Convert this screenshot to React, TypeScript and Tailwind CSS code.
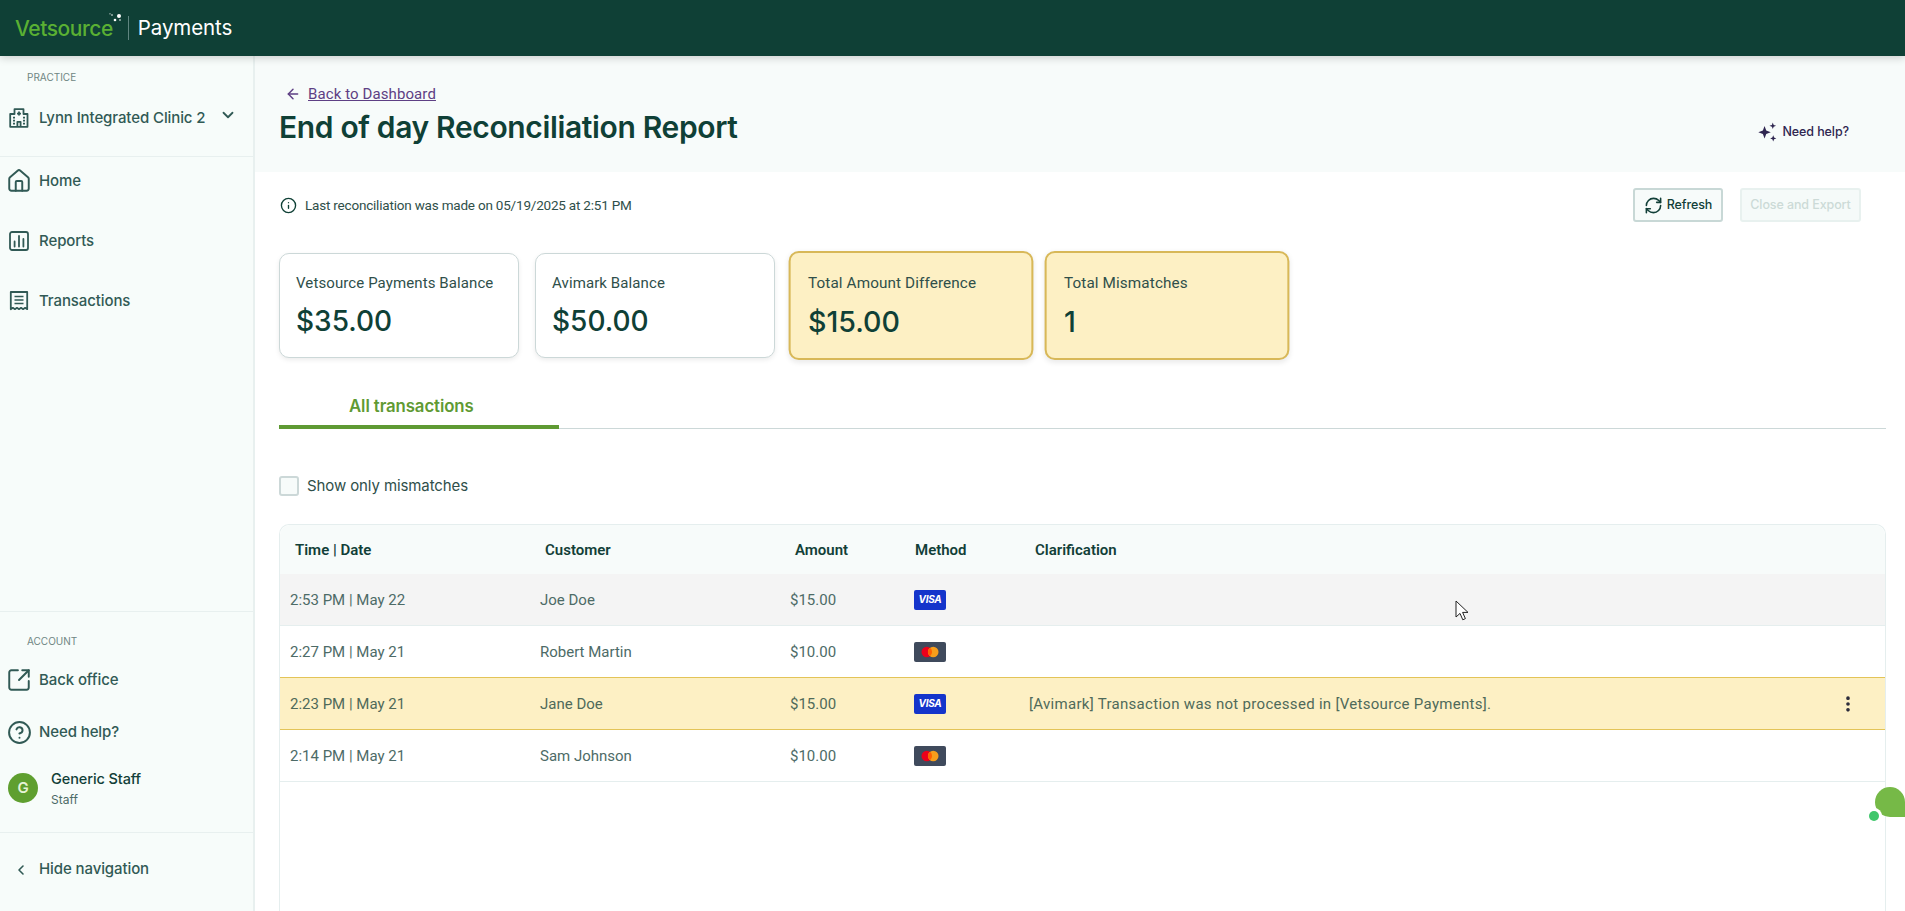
import * as React from "react";
import {
  ArrowLeft,
  ChevronDown,
  ChevronLeft,
  CircleHelp,
  EllipsisVertical,
  House,
  Info,
  RefreshCw,
  SquareArrowOutUpRight,
} from "lucide-react";

type Row = {
  when: string;
  customer: string;
  amount: string;
  method: "visa" | "mc";
  note?: string;
  tone?: "hover" | "warn";
};

const rows: Row[] = [
  { when: "2:53 PM | May 22", customer: "Joe Doe", amount: "$15.00", method: "visa", tone: "hover" },
  { when: "2:27 PM | May 21", customer: "Robert Martin", amount: "$10.00", method: "mc" },
  {
    when: "2:23 PM | May 21",
    customer: "Jane Doe",
    amount: "$15.00",
    method: "visa",
    note: "[Avimark] Transaction was not processed in [Vetsource Payments].",
    tone: "warn",
  },
  { when: "2:14 PM | May 21", customer: "Sam Johnson", amount: "$10.00", method: "mc" },
];

const cols = "grid grid-cols-[250px_250px_120px_120px_1fr]";

function CardIcon({ method }: { method: Row["method"] }) {
  if (method === "visa") {
    return (
      <span className="flex h-5 w-8 items-center justify-center rounded-[2px] bg-[#1434cb] font-['Inter',sans-serif] text-[10px] font-bold italic tracking-[-0.3px] text-white">
        VISA
      </span>
    );
  }
  return (
    <span className="flex h-5 w-8 items-center justify-center rounded-[2px] bg-[#3f4a5c]">
      <svg width="18" height="12" viewBox="0 0 18 12">
        <circle cx="5.8" cy="6" r="5.3" fill="#eb001b" />
        <circle cx="12.2" cy="6" r="5.3" fill="#f79e1b" />
        <path d="M9 1.8a5.3 5.3 0 0 1 0 8.4 5.3 5.3 0 0 1 0-8.4z" fill="#ff5f00" />
      </svg>
    </span>
  );
}

function ClinicIcon() {
  return (
    <svg width="20" height="20" viewBox="0 0 20 20" fill="none" stroke="#315a55" strokeWidth="1.8" strokeLinejoin="round">
      <path d="M5.5 6V1.2h9V6h4v12.8H1.2V6z" />
      <path d="M10 3.6v4M8 5.6h4" strokeWidth="1.8" />
      <path d="M8.4 18.8v-5h3.2v5" />
      <path d="M4 9.6h2M4 12.6h2M4 15.6h2M14 9.6h2M14 12.6h2M14 15.6h2" strokeWidth="1.6" />
    </svg>
  );
}

function ReportsIcon() {
  return (
    <svg width="20" height="20" viewBox="0 0 20 20" fill="none" stroke="#315a55" strokeWidth="1.8" strokeLinecap="round">
      <rect x="1" y="1" width="18" height="18" rx="2" />
      <path d="M5.6 10.5v5M10 5v10.5M14.4 8v7.5" />
    </svg>
  );
}

function ReceiptIcon() {
  return (
    <svg width="20" height="20" viewBox="0 0 20 20" fill="none" stroke="#315a55" strokeWidth="1.8" strokeLinejoin="round">
      <path d="M1.8 1h16.4v17.2l-2.05-1.4-2.05 1.4-2.05-1.4L10 18.2l-2.05-1.4-2.05 1.4-2.05-1.4-2.05 1.4z" />
      <path d="M5.5 5.5h9M5.5 9h9M5.5 12.5h9" strokeWidth="1.6" />
    </svg>
  );
}

function Sparkles() {
  return (
    <svg width="20" height="20" viewBox="0 0 18 18" fill="#2f2650">
      <path d="M6.8 3.6 8.3 7.7l4.1 1.5-4.1 1.5-1.5 4.1-1.5-4.1L1.2 9.2l4.1-1.5z" />
      <path d="M14.2 0.4 15 2.6l2.2.8-2.2.8-.8 2.2-.8-2.2-2.2-.8 2.2-.8z" />
      <path d="M14.6 12l.8 2 2 .8-2 .8-.8 2-.8-2-2-.8 2-.8z" />
    </svg>
  );
}

function NavItem({ icon, label, className }: { icon: React.ReactNode; label: string; className: string }) {
  return (
    <div className={`flex items-center gap-[10px] pl-[9px] font-['Inter',sans-serif] text-[15px] font-medium tracking-[-0.1px] text-[#315a55] ${className}`}>
      <span className="flex w-5 justify-center">{icon}</span>
      {label}
    </div>
  );
}

function StatCard({ label, value, warn }: { label: string; value: string; warn?: boolean }) {
  return (
    <div
      className={
        warn
          ? "h-[107px] w-[240px] scale-[1.02] rounded-[10px] border-2 border-[#d8b858] bg-[#fdf0c4] px-[17px] pt-[19px] shadow-[0_2px_5px_rgba(0,0,0,0.08)]"
          : "h-[105px] w-[240px] rounded-[10px] border border-[#ccd8d8] bg-white px-4 pt-[19px] shadow-[0_2px_5px_rgba(0,0,0,0.08)]"
      }
    >
      <div className="font-['Roboto',sans-serif] text-[15px] leading-5 tracking-[0.1px] text-[#2f4f4a]">{label}</div>
      <div className="mt-[8px] font-['Inter',sans-serif] text-[28px] font-medium leading-[40px] text-[#0f4036]">{value}</div>
    </div>
  );
}

export default function App() {
  return (
    <div className="relative h-screen overflow-hidden bg-white">
      <header className="relative z-10 flex h-14 items-center bg-[#0f4036] pl-[15px] shadow-[0_2px_8px_rgba(0,0,0,0.18)]">
        <div className="relative font-['Inter',sans-serif] text-[21px] font-medium leading-none tracking-[-0.45px] text-[#5ab033]">
          Vetsource
          <svg className="absolute -right-[9px] -top-[5px]" width="13" height="11" viewBox="0 0 13 11" fill="#fff">
            <circle cx="10" cy="3" r="2" />
            <circle cx="6" cy="7" r="1.3" />
            <circle cx="3" cy="2" r="0.8" />
            <circle cx="1" cy="0.8" r="0.6" />
            <circle cx="11" cy="7" r="0.8" />
          </svg>
        </div>
        <div className="ml-[15px] h-6 w-px bg-[#5f8580]" />
        <div className="ml-[9px] font-['Inter',sans-serif] text-[20.5px] leading-none tracking-[-0.1px] text-white">Payments</div>
      </header>

      <div className="flex h-[855px]">
        <aside className="flex w-[255px] shrink-0 flex-col justify-between border-r-2 border-[#e8f0ef] bg-[#f7fcfa]">
          <div>
            <div className="border-b border-[#e8f0ef] pb-0">
              <div className="pl-[27px] pt-[15px] font-['Inter',sans-serif] text-[10px] leading-3 text-[#6f8683]">PRACTICE</div>
              <div className="mb-[23px] mt-[20px] flex h-[30px] items-center pl-[9px]">
                <ClinicIcon />
                <span className="ml-[10px] font-['Inter',sans-serif] text-[15px] font-medium tracking-[-0.1px] text-[#315a55]">
                  Lynn Integrated Clinic 2
                </span>
                <ChevronDown className="ml-auto mb-[6px] mr-[16px]" size={18} strokeWidth={2.4} color="#315a55" />
              </div>
            </div>
            <div className="flex flex-col gap-[12px]">
              <NavItem className="h-[48px]" icon={<House className="shrink-0" size={26} strokeWidth={1.8} />} label="Home" />
              <NavItem className="h-[48px]" icon={<ReportsIcon />} label="Reports" />
              <NavItem className="h-[48px]" icon={<ReceiptIcon />} label="Transactions" />
            </div>
          </div>
          <div>
            <div className="border-t border-[#e8f0ef] pl-[27px] pt-[23px] font-['Inter',sans-serif] text-[10px] leading-3 text-[#6f8683]">ACCOUNT</div>
            <NavItem className="mt-[11px] h-[44px]" icon={<SquareArrowOutUpRight className="shrink-0" size={26} strokeWidth={1.8} />} label="Back office" />
            <NavItem className="mt-[8px] h-[44px]" icon={<CircleHelp className="shrink-0" size={25} strokeWidth={1.9} />} label="Need help?" />
            <div className="mt-[6px] flex h-[56px] items-center pl-2">
              <div className="flex h-[30px] w-[30px] items-center justify-center rounded-full bg-[#5f9f2f] font-['Inter',sans-serif] text-[15px] font-semibold text-[#e6f3d6]">
                G
              </div>
              <div className="ml-[13px] font-['Inter',sans-serif]">
                <div className="text-[14.5px] font-medium leading-5 tracking-[-0.1px] text-[#123f38]">Generic Staff</div>
                <div className="mt-[3px] text-[12px] leading-4 text-[#4d6b67]">Staff</div>
              </div>
            </div>
            <div className="mt-[16px] flex h-[79px] items-center border-t border-[#e8f0ef] pb-[5px] pl-[13px] font-['Inter',sans-serif] text-[15px] font-medium tracking-[-0.1px] text-[#315a55]">
              <ChevronLeft size={16} strokeWidth={2.4} />
              <span className="ml-[10px]">Hide navigation</span>
            </div>
          </div>
        </aside>

        <main className="min-w-0 flex-1">
          <section className="relative h-[116px] bg-[#f7fbfa] pl-[24px] pr-[19px]">
            <div className="flex items-center pl-[6px] pt-[29px]">
              <ArrowLeft size={16} strokeWidth={2.2} color="#5e3f84" />
              <a className="ml-[7px] font-['Roboto',sans-serif] text-[15px] leading-[18px] tracking-[0.1px] text-[#5e3f84] underline">Back to Dashboard</a>
            </div>
            <h1 className="mt-[4px] font-['Inter',sans-serif] text-[30px] font-semibold leading-[40px] tracking-[-0.35px] text-[#0f4036]">
              End of day Reconciliation Report
            </h1>
            <div className="absolute right-[56px] top-[66px] flex items-center gap-[5px] font-['Inter',sans-serif] text-[12.5px] font-medium tracking-[-0.1px] text-[#2f2650]">
              <Sparkles />
              Need help?
            </div>
          </section>

          <section className="pl-[24px] pr-[19px]">
            <div className="flex items-center pt-4">
              <Info className="ml-[1px]" size={17} strokeWidth={1.9} color="#0f4036" />
              <span className="ml-[8px] font-['Roboto',sans-serif] text-[13.5px] leading-5 tracking-[-0.2px] text-[#2f4f4a]">
                Last reconciliation was made on 05/19/2025 at 2:51 PM
              </span>
              <button className="ml-auto mr-[17px] flex h-[34px] w-[90px] items-center justify-center gap-[4px] rounded-[3px] border-2 border-[#c8d8d6] bg-[#f7fbfa] font-['Inter',sans-serif] text-[12.5px] font-medium tracking-[-0.1px] text-[#123f38]">
                <RefreshCw size={19} strokeWidth={2} />
                Refresh
              </button>
              <button className="mr-[25px] h-[34px] w-[121px] rounded-[3px] border-2 border-[#e8f1ef] bg-[#f5faf9] font-['Inter',sans-serif] text-[12.5px] font-medium tracking-[-0.1px] text-[#ccdad7]">
                Close and Export
              </button>
            </div>

            <div className="mt-[30px] flex items-center gap-4">
              <StatCard label="Vetsource Payments Balance" value="$35.00" />
              <StatCard label="Avimark Balance" value="$50.00" />
              <StatCard label="Total Amount Difference" value="$15.00" warn />
              <StatCard label="Total Mismatches" value="1" warn />
            </div>

            <div className="mt-[31px] h-[39px] border-b border-[#ccd8d8]">
              <div className="h-[39px] w-[280px] border-b-[4px] border-[#5f9a33] pl-[70px] pt-[4px] font-['Inter',sans-serif] text-[16.8px] font-semibold tracking-[-0.1px] text-[#5f9a33]">
                All transactions
              </div>
            </div>

            <label className="mt-[47px] flex h-5 items-center">
              <span className="h-5 w-5 rounded-[3px] border-2 border-[#ccd8d8] bg-[#f7fbfa]" />
              <span className="ml-2 font-['Inter',sans-serif] text-[15px] tracking-[-0.1px] text-[#2f4f4a]">Show only mismatches</span>
            </label>

            <div className="mt-[28px] h-[400px] rounded-t-[10px] border-x border-t border-[#e5eeee]">
              <div className={`${cols} h-[49px] items-center rounded-t-[10px] bg-[#f7fbfa] pt-[2px] font-['Roboto',sans-serif] text-[15px] font-semibold text-[#123f38]`}>
                <div className="pl-[15px]">Time | Date</div>
                <div className="pl-[15px]">Customer</div>
                <div className="pl-[15px]">Amount</div>
                <div className="pl-[15px]">Method</div>
                <div className="pl-[15px]">Clarification</div>
              </div>
              {rows.map((r) => (
                <div
                  key={r.when}
                  className={`${cols} relative h-[52px] items-center border-b font-['Roboto',sans-serif] text-[15px] ${
                    r.tone === "warn"
                      ? "-mt-px h-[53px] border-y border-[#e3c458] bg-[#fdf0c4] text-[#4f6a5a]"
                      : r.tone === "hover"
                        ? "border-[#e5eeee] bg-[#f4f4f4] text-[#4d6b67]"
                        : "border-[#e5eeee] bg-white text-[#4d6b67]"
                  }`}
                >
                  <div className="pl-[10px] pt-[2px]">{r.when}</div>
                  <div className="pl-[10px] pt-[2px]">{r.customer}</div>
                  <div className="pl-[10px] pt-[2px]">{r.amount}</div>
                  <div className="pl-[14px]">
                    <CardIcon method={r.method} />
                  </div>
                  <div className="pl-[9px] pt-[2px] tracking-[0.3px]">{r.note}</div>
                  {r.note ? (
                    <EllipsisVertical className="absolute right-[27px] top-[16px]" size={20} strokeWidth={2.4} color="#2a2a3a" />
                  ) : null}
                </div>
              ))}
            </div>
          </section>
        </main>
      </div>

      <svg className="absolute left-[1455px] top-[600px]" width="14" height="21" viewBox="0 0 14 21">
        <path d="M1 1v16l4-3.6 2.8 6.4 2.6-1.2-2.8-6.2h5.4z" fill="#fff" stroke="#222" strokeWidth="1" />
      </svg>

      <div className="absolute left-[1875px] top-[787px] h-[30px] w-[30px] rounded-t-[15px] rounded-bl-[15px] bg-[#76b947]" />
      <div className="absolute left-[1866px] top-[808px] h-[16px] w-[16px] rounded-full bg-white" />
      <div className="absolute left-[1869px] top-[811px] h-[10px] w-[10px] rounded-full bg-[#3fc76b]" />
    </div>
  );
}
